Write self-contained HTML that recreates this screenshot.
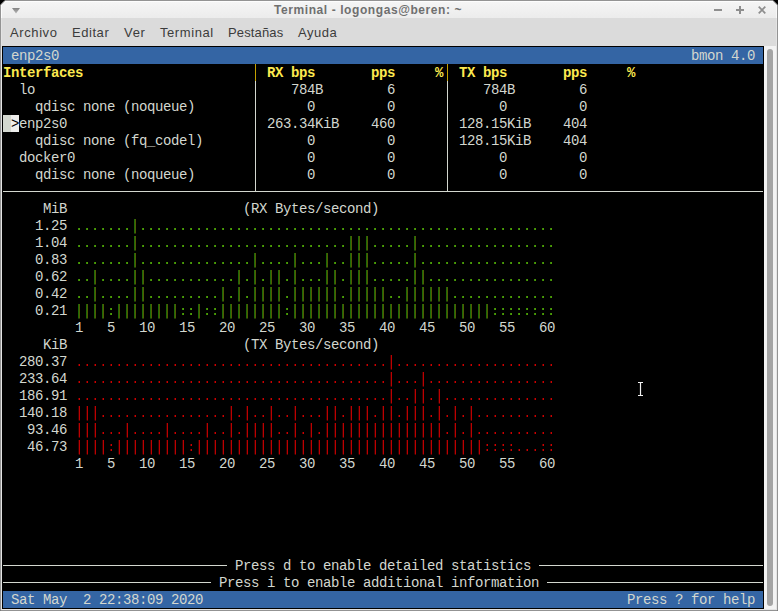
<!DOCTYPE html>
<html><head><meta charset="utf-8"><title>Terminal - logongas@beren: ~</title>
<style>
html,body{margin:0;padding:0;background:#000;}
body{width:778px;height:611px;position:relative;overflow:hidden;font-family:"Liberation Sans",sans-serif;}
#win{position:absolute;left:0;top:0;width:776px;height:609px;border:1px solid #939393;border-radius:5px 5px 0 0;background:#dbdbdb;overflow:hidden;}
#inner{position:absolute;left:1px;top:18px;width:774px;height:591px;border:1px solid #e4e4e4;border-top:none;box-sizing:content-box;}
#title{position:absolute;left:1px;top:1px;width:776px;height:17px;background:linear-gradient(#f5f5f5,#ececec);border-radius:4px 4px 0 0;box-shadow:inset 1px 1px 0 #fdfdfd,inset -1px 0 0 #f8f8f8;}
#ttext{position:absolute;left:274px;top:0;font:bold 12px "Liberation Sans",sans-serif;letter-spacing:0.58px;color:#6f6f6f;line-height:20px;white-space:pre;}
#menu span{position:absolute;top:25px;font:13px "Liberation Sans",sans-serif;color:#3c3c3c;line-height:16px;white-space:pre;}
#term{position:absolute;left:2px;top:46px;width:762px;height:563px;background:#000;}
#sb{position:absolute;left:764px;top:46px;width:12px;height:563px;background:#f3f3f3;}
#thumb{position:absolute;left:767px;top:49px;width:6px;height:557px;border-radius:3px;background:#a4a4a4;}
.t{position:absolute;font:14px "Liberation Mono",monospace;letter-spacing:-0.4014px;line-height:17px;height:17px;color:#d3d7cf;white-space:pre;}
.b{font-weight:bold;}
i{position:absolute;display:block;}
.gb,.rb{width:2px;height:17px;background-repeat:no-repeat;}
.gb{background-image:linear-gradient(90deg,#1e6a08 50%,#505c02 50%),linear-gradient(90deg,#113805 50%,#293001 50%);background-size:2px 14px,2px 1px;background-position:0 2px,0 16px;}
.rb{background-image:linear-gradient(90deg,#3a0000 50%,#bc0000 50%),linear-gradient(90deg,#1a0000 50%,#620000 50%);background-size:2px 14px,2px 1px;background-position:0 2px,0 16px;}
.gd,.rd,.gc,.rc{width:2px;height:17px;background-repeat:no-repeat;background-size:2px 2px;}
.gd{background-image:linear-gradient(90deg,#3a8a06 50%,#4e9a06 50%);background-position:0 11px;}
.rd{background-image:linear-gradient(90deg,#600000 50%,#cc0000 50%);background-position:0 11px;}
.gc{background-image:linear-gradient(90deg,#3a8a06 50%,#4e9a06 50%),linear-gradient(90deg,#3a8a06 50%,#4e9a06 50%);background-position:0 6px,0 11px;}
.rc{background-image:linear-gradient(90deg,#600000 50%,#cc0000 50%),linear-gradient(90deg,#600000 50%,#cc0000 50%);background-position:0 6px,0 11px;}
svg{position:absolute;}
</style></head><body>
<div id="win"></div><div id="inner"></div>
<div id="title"></div>
<div id="ttext">Terminal - logongas@beren: ~</div>
<svg style="left:0;top:0" width="778" height="20" viewBox="0 0 778 20">
<defs><linearGradient id="tg" x1="0" y1="0" x2="0" y2="1"><stop offset="0" stop-color="#838383"/><stop offset="1" stop-color="#b4b4b4"/></linearGradient></defs><path d="M12 8 L20 8 L16 13.4 Z" fill="url(#tg)"/>
<path d="M0 0 H5.3 L0 5.3 Z M778 0 H772.7 L778 5.3 Z" fill="#000"/><path d="M5.3 0.3 L0.3 5.3 M772.7 0.3 L777.7 5.3" stroke="#939393" stroke-width="1" fill="none"/><rect x="714" y="9" width="8" height="2" fill="#8e8e8e"/>
<rect x="736" y="9" width="8" height="2" fill="#8e8e8e"/><rect x="739" y="6" width="2" height="8" fill="#8e8e8e"/>
<path d="M758.7 6.7 L765.3 13.3 M765.3 6.7 L758.7 13.3" stroke="#8e8e8e" stroke-width="1.7" fill="none"/>
</svg>
<div id="menu">
<span style="left:10px;letter-spacing:.6px">Archivo</span><span style="left:72px;letter-spacing:.55px">Editar</span><span style="left:124px;letter-spacing:.7px">Ver</span><span style="left:160px;letter-spacing:.57px">Terminal</span><span style="left:228px;letter-spacing:.15px">Pestañas</span><span style="left:298px;letter-spacing:.5px">Ayuda</span>
</div>
<div id="term"></div>
<div id="sb"></div><div id="thumb"></div>
<i style="left:3px;top:47px;width:760px;height:17px;background:#3465a4"></i>
<span class="t" style="left:11px;top:48px;">enp2s0</span>
<span class="t" style="left:691px;top:48px;">bmon</span>
<span class="t" style="left:731px;top:48px;">4.0</span>
<span class="t b" style="left:3px;top:65px;color:#fce94f;">Interfaces</span>
<span class="t b" style="left:267px;top:65px;color:#fce94f;">RX</span>
<span class="t b" style="left:291px;top:65px;color:#fce94f;">bps</span>
<span class="t b" style="left:371px;top:65px;color:#fce94f;">pps</span>
<span class="t b" style="left:435px;top:65px;color:#fce94f;">%</span>
<span class="t b" style="left:459px;top:65px;color:#fce94f;">TX</span>
<span class="t b" style="left:483px;top:65px;color:#fce94f;">bps</span>
<span class="t b" style="left:563px;top:65px;color:#fce94f;">pps</span>
<span class="t b" style="left:627px;top:65px;color:#fce94f;">%</span>
<span class="t" style="left:19px;top:82px;">lo</span>
<span class="t" style="left:291px;top:82px;">784B</span>
<span class="t" style="left:387px;top:82px;">6</span>
<span class="t" style="left:483px;top:82px;">784B</span>
<span class="t" style="left:579px;top:82px;">6</span>
<span class="t" style="left:35px;top:99px;">qdisc</span>
<span class="t" style="left:83px;top:99px;">none</span>
<span class="t" style="left:123px;top:99px;">(noqueue)</span>
<span class="t" style="left:307px;top:99px;">0</span>
<span class="t" style="left:387px;top:99px;">0</span>
<span class="t" style="left:499px;top:99px;">0</span>
<span class="t" style="left:579px;top:99px;">0</span>
<span class="t" style="left:19px;top:116px;">enp2s0</span>
<span class="t" style="left:267px;top:116px;">263.34KiB</span>
<span class="t" style="left:371px;top:116px;">460</span>
<span class="t" style="left:459px;top:116px;">128.15KiB</span>
<span class="t" style="left:563px;top:116px;">404</span>
<span class="t" style="left:35px;top:133px;">qdisc</span>
<span class="t" style="left:83px;top:133px;">none</span>
<span class="t" style="left:123px;top:133px;">(fq_codel)</span>
<span class="t" style="left:307px;top:133px;">0</span>
<span class="t" style="left:387px;top:133px;">0</span>
<span class="t" style="left:459px;top:133px;">128.15KiB</span>
<span class="t" style="left:563px;top:133px;">404</span>
<span class="t" style="left:19px;top:150px;">docker0</span>
<span class="t" style="left:307px;top:150px;">0</span>
<span class="t" style="left:387px;top:150px;">0</span>
<span class="t" style="left:499px;top:150px;">0</span>
<span class="t" style="left:579px;top:150px;">0</span>
<span class="t" style="left:35px;top:167px;">qdisc</span>
<span class="t" style="left:83px;top:167px;">none</span>
<span class="t" style="left:123px;top:167px;">(noqueue)</span>
<span class="t" style="left:307px;top:167px;">0</span>
<span class="t" style="left:387px;top:167px;">0</span>
<span class="t" style="left:499px;top:167px;">0</span>
<span class="t" style="left:579px;top:167px;">0</span>
<i style="left:3px;top:115px;width:8px;height:17px;background:#d3d7cf"></i>
<i style="left:11px;top:115px;width:8px;height:17px;background:#eeeeec"></i>
<span class="t" style="left:11px;top:116px;color:#000;">&gt;</span>
<i style="left:255px;top:64px;width:1px;height:17px;background:#c4a000"></i>
<i style="left:255px;top:81px;width:1px;height:110px;background:#d3d7cf"></i>
<i style="left:447px;top:64px;width:1px;height:17px;background:#c4a000"></i>
<i style="left:447px;top:81px;width:1px;height:110px;background:#d3d7cf"></i>
<i style="left:3px;top:191px;width:760px;height:1px;background:#d3d7cf"></i>
<i class="gd" style="left:78px;top:217px"></i>
<i class="gd" style="left:86px;top:217px"></i>
<i class="gd" style="left:94px;top:217px"></i>
<i class="gd" style="left:102px;top:217px"></i>
<i class="gd" style="left:110px;top:217px"></i>
<i class="gd" style="left:118px;top:217px"></i>
<i class="gd" style="left:126px;top:217px"></i>
<i class="gb" style="left:134px;top:217px"></i>
<i class="gd" style="left:142px;top:217px"></i>
<i class="gd" style="left:150px;top:217px"></i>
<i class="gd" style="left:158px;top:217px"></i>
<i class="gd" style="left:166px;top:217px"></i>
<i class="gd" style="left:174px;top:217px"></i>
<i class="gd" style="left:182px;top:217px"></i>
<i class="gd" style="left:190px;top:217px"></i>
<i class="gd" style="left:198px;top:217px"></i>
<i class="gd" style="left:206px;top:217px"></i>
<i class="gd" style="left:214px;top:217px"></i>
<i class="gd" style="left:222px;top:217px"></i>
<i class="gd" style="left:230px;top:217px"></i>
<i class="gd" style="left:238px;top:217px"></i>
<i class="gd" style="left:246px;top:217px"></i>
<i class="gd" style="left:254px;top:217px"></i>
<i class="gd" style="left:262px;top:217px"></i>
<i class="gd" style="left:270px;top:217px"></i>
<i class="gd" style="left:278px;top:217px"></i>
<i class="gd" style="left:286px;top:217px"></i>
<i class="gd" style="left:294px;top:217px"></i>
<i class="gd" style="left:302px;top:217px"></i>
<i class="gd" style="left:310px;top:217px"></i>
<i class="gd" style="left:318px;top:217px"></i>
<i class="gd" style="left:326px;top:217px"></i>
<i class="gd" style="left:334px;top:217px"></i>
<i class="gd" style="left:342px;top:217px"></i>
<i class="gd" style="left:350px;top:217px"></i>
<i class="gd" style="left:358px;top:217px"></i>
<i class="gd" style="left:366px;top:217px"></i>
<i class="gd" style="left:374px;top:217px"></i>
<i class="gd" style="left:382px;top:217px"></i>
<i class="gd" style="left:390px;top:217px"></i>
<i class="gd" style="left:398px;top:217px"></i>
<i class="gd" style="left:406px;top:217px"></i>
<i class="gd" style="left:414px;top:217px"></i>
<i class="gd" style="left:422px;top:217px"></i>
<i class="gd" style="left:430px;top:217px"></i>
<i class="gd" style="left:438px;top:217px"></i>
<i class="gd" style="left:446px;top:217px"></i>
<i class="gd" style="left:454px;top:217px"></i>
<i class="gd" style="left:462px;top:217px"></i>
<i class="gd" style="left:470px;top:217px"></i>
<i class="gd" style="left:478px;top:217px"></i>
<i class="gd" style="left:486px;top:217px"></i>
<i class="gd" style="left:494px;top:217px"></i>
<i class="gd" style="left:502px;top:217px"></i>
<i class="gd" style="left:510px;top:217px"></i>
<i class="gd" style="left:518px;top:217px"></i>
<i class="gd" style="left:526px;top:217px"></i>
<i class="gd" style="left:534px;top:217px"></i>
<i class="gd" style="left:542px;top:217px"></i>
<i class="gd" style="left:550px;top:217px"></i>
<i class="gd" style="left:78px;top:234px"></i>
<i class="gd" style="left:86px;top:234px"></i>
<i class="gd" style="left:94px;top:234px"></i>
<i class="gd" style="left:102px;top:234px"></i>
<i class="gd" style="left:110px;top:234px"></i>
<i class="gd" style="left:118px;top:234px"></i>
<i class="gd" style="left:126px;top:234px"></i>
<i class="gb" style="left:134px;top:234px"></i>
<i class="gd" style="left:142px;top:234px"></i>
<i class="gd" style="left:150px;top:234px"></i>
<i class="gd" style="left:158px;top:234px"></i>
<i class="gd" style="left:166px;top:234px"></i>
<i class="gd" style="left:174px;top:234px"></i>
<i class="gd" style="left:182px;top:234px"></i>
<i class="gd" style="left:190px;top:234px"></i>
<i class="gd" style="left:198px;top:234px"></i>
<i class="gd" style="left:206px;top:234px"></i>
<i class="gd" style="left:214px;top:234px"></i>
<i class="gd" style="left:222px;top:234px"></i>
<i class="gd" style="left:230px;top:234px"></i>
<i class="gd" style="left:238px;top:234px"></i>
<i class="gd" style="left:246px;top:234px"></i>
<i class="gd" style="left:254px;top:234px"></i>
<i class="gd" style="left:262px;top:234px"></i>
<i class="gd" style="left:270px;top:234px"></i>
<i class="gd" style="left:278px;top:234px"></i>
<i class="gd" style="left:286px;top:234px"></i>
<i class="gd" style="left:294px;top:234px"></i>
<i class="gd" style="left:302px;top:234px"></i>
<i class="gd" style="left:310px;top:234px"></i>
<i class="gd" style="left:318px;top:234px"></i>
<i class="gd" style="left:326px;top:234px"></i>
<i class="gd" style="left:334px;top:234px"></i>
<i class="gd" style="left:342px;top:234px"></i>
<i class="gb" style="left:350px;top:234px"></i>
<i class="gb" style="left:358px;top:234px"></i>
<i class="gb" style="left:366px;top:234px"></i>
<i class="gd" style="left:374px;top:234px"></i>
<i class="gd" style="left:382px;top:234px"></i>
<i class="gd" style="left:390px;top:234px"></i>
<i class="gd" style="left:398px;top:234px"></i>
<i class="gd" style="left:406px;top:234px"></i>
<i class="gb" style="left:414px;top:234px"></i>
<i class="gd" style="left:422px;top:234px"></i>
<i class="gd" style="left:430px;top:234px"></i>
<i class="gd" style="left:438px;top:234px"></i>
<i class="gd" style="left:446px;top:234px"></i>
<i class="gd" style="left:454px;top:234px"></i>
<i class="gd" style="left:462px;top:234px"></i>
<i class="gd" style="left:470px;top:234px"></i>
<i class="gd" style="left:478px;top:234px"></i>
<i class="gd" style="left:486px;top:234px"></i>
<i class="gd" style="left:494px;top:234px"></i>
<i class="gd" style="left:502px;top:234px"></i>
<i class="gd" style="left:510px;top:234px"></i>
<i class="gd" style="left:518px;top:234px"></i>
<i class="gd" style="left:526px;top:234px"></i>
<i class="gd" style="left:534px;top:234px"></i>
<i class="gd" style="left:542px;top:234px"></i>
<i class="gd" style="left:550px;top:234px"></i>
<i class="gd" style="left:78px;top:251px"></i>
<i class="gd" style="left:86px;top:251px"></i>
<i class="gd" style="left:94px;top:251px"></i>
<i class="gd" style="left:102px;top:251px"></i>
<i class="gd" style="left:110px;top:251px"></i>
<i class="gd" style="left:118px;top:251px"></i>
<i class="gd" style="left:126px;top:251px"></i>
<i class="gb" style="left:134px;top:251px"></i>
<i class="gd" style="left:142px;top:251px"></i>
<i class="gd" style="left:150px;top:251px"></i>
<i class="gd" style="left:158px;top:251px"></i>
<i class="gd" style="left:166px;top:251px"></i>
<i class="gd" style="left:174px;top:251px"></i>
<i class="gd" style="left:182px;top:251px"></i>
<i class="gd" style="left:190px;top:251px"></i>
<i class="gd" style="left:198px;top:251px"></i>
<i class="gd" style="left:206px;top:251px"></i>
<i class="gd" style="left:214px;top:251px"></i>
<i class="gd" style="left:222px;top:251px"></i>
<i class="gd" style="left:230px;top:251px"></i>
<i class="gd" style="left:238px;top:251px"></i>
<i class="gd" style="left:246px;top:251px"></i>
<i class="gb" style="left:254px;top:251px"></i>
<i class="gd" style="left:262px;top:251px"></i>
<i class="gd" style="left:270px;top:251px"></i>
<i class="gd" style="left:278px;top:251px"></i>
<i class="gd" style="left:286px;top:251px"></i>
<i class="gb" style="left:294px;top:251px"></i>
<i class="gd" style="left:302px;top:251px"></i>
<i class="gd" style="left:310px;top:251px"></i>
<i class="gd" style="left:318px;top:251px"></i>
<i class="gb" style="left:326px;top:251px"></i>
<i class="gd" style="left:334px;top:251px"></i>
<i class="gd" style="left:342px;top:251px"></i>
<i class="gb" style="left:350px;top:251px"></i>
<i class="gb" style="left:358px;top:251px"></i>
<i class="gb" style="left:366px;top:251px"></i>
<i class="gd" style="left:374px;top:251px"></i>
<i class="gd" style="left:382px;top:251px"></i>
<i class="gd" style="left:390px;top:251px"></i>
<i class="gd" style="left:398px;top:251px"></i>
<i class="gd" style="left:406px;top:251px"></i>
<i class="gb" style="left:414px;top:251px"></i>
<i class="gd" style="left:422px;top:251px"></i>
<i class="gd" style="left:430px;top:251px"></i>
<i class="gd" style="left:438px;top:251px"></i>
<i class="gd" style="left:446px;top:251px"></i>
<i class="gd" style="left:454px;top:251px"></i>
<i class="gd" style="left:462px;top:251px"></i>
<i class="gd" style="left:470px;top:251px"></i>
<i class="gd" style="left:478px;top:251px"></i>
<i class="gd" style="left:486px;top:251px"></i>
<i class="gd" style="left:494px;top:251px"></i>
<i class="gd" style="left:502px;top:251px"></i>
<i class="gd" style="left:510px;top:251px"></i>
<i class="gd" style="left:518px;top:251px"></i>
<i class="gd" style="left:526px;top:251px"></i>
<i class="gd" style="left:534px;top:251px"></i>
<i class="gd" style="left:542px;top:251px"></i>
<i class="gd" style="left:550px;top:251px"></i>
<i class="gd" style="left:78px;top:268px"></i>
<i class="gd" style="left:86px;top:268px"></i>
<i class="gb" style="left:94px;top:268px"></i>
<i class="gd" style="left:102px;top:268px"></i>
<i class="gd" style="left:110px;top:268px"></i>
<i class="gd" style="left:118px;top:268px"></i>
<i class="gd" style="left:126px;top:268px"></i>
<i class="gb" style="left:134px;top:268px"></i>
<i class="gb" style="left:142px;top:268px"></i>
<i class="gd" style="left:150px;top:268px"></i>
<i class="gd" style="left:158px;top:268px"></i>
<i class="gd" style="left:166px;top:268px"></i>
<i class="gd" style="left:174px;top:268px"></i>
<i class="gd" style="left:182px;top:268px"></i>
<i class="gd" style="left:190px;top:268px"></i>
<i class="gd" style="left:198px;top:268px"></i>
<i class="gd" style="left:206px;top:268px"></i>
<i class="gd" style="left:214px;top:268px"></i>
<i class="gd" style="left:222px;top:268px"></i>
<i class="gd" style="left:230px;top:268px"></i>
<i class="gb" style="left:238px;top:268px"></i>
<i class="gd" style="left:246px;top:268px"></i>
<i class="gb" style="left:254px;top:268px"></i>
<i class="gd" style="left:262px;top:268px"></i>
<i class="gb" style="left:270px;top:268px"></i>
<i class="gb" style="left:278px;top:268px"></i>
<i class="gd" style="left:286px;top:268px"></i>
<i class="gb" style="left:294px;top:268px"></i>
<i class="gd" style="left:302px;top:268px"></i>
<i class="gd" style="left:310px;top:268px"></i>
<i class="gd" style="left:318px;top:268px"></i>
<i class="gb" style="left:326px;top:268px"></i>
<i class="gb" style="left:334px;top:268px"></i>
<i class="gd" style="left:342px;top:268px"></i>
<i class="gb" style="left:350px;top:268px"></i>
<i class="gb" style="left:358px;top:268px"></i>
<i class="gb" style="left:366px;top:268px"></i>
<i class="gd" style="left:374px;top:268px"></i>
<i class="gd" style="left:382px;top:268px"></i>
<i class="gd" style="left:390px;top:268px"></i>
<i class="gd" style="left:398px;top:268px"></i>
<i class="gd" style="left:406px;top:268px"></i>
<i class="gb" style="left:414px;top:268px"></i>
<i class="gb" style="left:422px;top:268px"></i>
<i class="gd" style="left:430px;top:268px"></i>
<i class="gd" style="left:438px;top:268px"></i>
<i class="gd" style="left:446px;top:268px"></i>
<i class="gd" style="left:454px;top:268px"></i>
<i class="gd" style="left:462px;top:268px"></i>
<i class="gd" style="left:470px;top:268px"></i>
<i class="gd" style="left:478px;top:268px"></i>
<i class="gd" style="left:486px;top:268px"></i>
<i class="gd" style="left:494px;top:268px"></i>
<i class="gd" style="left:502px;top:268px"></i>
<i class="gd" style="left:510px;top:268px"></i>
<i class="gd" style="left:518px;top:268px"></i>
<i class="gd" style="left:526px;top:268px"></i>
<i class="gd" style="left:534px;top:268px"></i>
<i class="gd" style="left:542px;top:268px"></i>
<i class="gd" style="left:550px;top:268px"></i>
<i class="gd" style="left:78px;top:285px"></i>
<i class="gd" style="left:86px;top:285px"></i>
<i class="gb" style="left:94px;top:285px"></i>
<i class="gd" style="left:102px;top:285px"></i>
<i class="gd" style="left:110px;top:285px"></i>
<i class="gd" style="left:118px;top:285px"></i>
<i class="gd" style="left:126px;top:285px"></i>
<i class="gb" style="left:134px;top:285px"></i>
<i class="gb" style="left:142px;top:285px"></i>
<i class="gd" style="left:150px;top:285px"></i>
<i class="gd" style="left:158px;top:285px"></i>
<i class="gd" style="left:166px;top:285px"></i>
<i class="gd" style="left:174px;top:285px"></i>
<i class="gd" style="left:182px;top:285px"></i>
<i class="gd" style="left:190px;top:285px"></i>
<i class="gd" style="left:198px;top:285px"></i>
<i class="gd" style="left:206px;top:285px"></i>
<i class="gd" style="left:214px;top:285px"></i>
<i class="gb" style="left:222px;top:285px"></i>
<i class="gd" style="left:230px;top:285px"></i>
<i class="gb" style="left:238px;top:285px"></i>
<i class="gd" style="left:246px;top:285px"></i>
<i class="gb" style="left:254px;top:285px"></i>
<i class="gb" style="left:262px;top:285px"></i>
<i class="gb" style="left:270px;top:285px"></i>
<i class="gb" style="left:278px;top:285px"></i>
<i class="gd" style="left:286px;top:285px"></i>
<i class="gb" style="left:294px;top:285px"></i>
<i class="gb" style="left:302px;top:285px"></i>
<i class="gb" style="left:310px;top:285px"></i>
<i class="gb" style="left:318px;top:285px"></i>
<i class="gb" style="left:326px;top:285px"></i>
<i class="gb" style="left:334px;top:285px"></i>
<i class="gd" style="left:342px;top:285px"></i>
<i class="gb" style="left:350px;top:285px"></i>
<i class="gb" style="left:358px;top:285px"></i>
<i class="gb" style="left:366px;top:285px"></i>
<i class="gb" style="left:374px;top:285px"></i>
<i class="gb" style="left:382px;top:285px"></i>
<i class="gd" style="left:390px;top:285px"></i>
<i class="gd" style="left:398px;top:285px"></i>
<i class="gb" style="left:406px;top:285px"></i>
<i class="gb" style="left:414px;top:285px"></i>
<i class="gb" style="left:422px;top:285px"></i>
<i class="gb" style="left:430px;top:285px"></i>
<i class="gb" style="left:438px;top:285px"></i>
<i class="gb" style="left:446px;top:285px"></i>
<i class="gd" style="left:454px;top:285px"></i>
<i class="gd" style="left:462px;top:285px"></i>
<i class="gd" style="left:470px;top:285px"></i>
<i class="gd" style="left:478px;top:285px"></i>
<i class="gd" style="left:486px;top:285px"></i>
<i class="gd" style="left:494px;top:285px"></i>
<i class="gd" style="left:502px;top:285px"></i>
<i class="gd" style="left:510px;top:285px"></i>
<i class="gd" style="left:518px;top:285px"></i>
<i class="gd" style="left:526px;top:285px"></i>
<i class="gd" style="left:534px;top:285px"></i>
<i class="gd" style="left:542px;top:285px"></i>
<i class="gd" style="left:550px;top:285px"></i>
<i class="gb" style="left:78px;top:302px"></i>
<i class="gb" style="left:86px;top:302px"></i>
<i class="gb" style="left:94px;top:302px"></i>
<i class="gb" style="left:102px;top:302px"></i>
<i class="gc" style="left:110px;top:302px"></i>
<i class="gb" style="left:118px;top:302px"></i>
<i class="gb" style="left:126px;top:302px"></i>
<i class="gb" style="left:134px;top:302px"></i>
<i class="gb" style="left:142px;top:302px"></i>
<i class="gb" style="left:150px;top:302px"></i>
<i class="gb" style="left:158px;top:302px"></i>
<i class="gb" style="left:166px;top:302px"></i>
<i class="gb" style="left:174px;top:302px"></i>
<i class="gc" style="left:182px;top:302px"></i>
<i class="gc" style="left:190px;top:302px"></i>
<i class="gb" style="left:198px;top:302px"></i>
<i class="gc" style="left:206px;top:302px"></i>
<i class="gc" style="left:214px;top:302px"></i>
<i class="gb" style="left:222px;top:302px"></i>
<i class="gb" style="left:230px;top:302px"></i>
<i class="gb" style="left:238px;top:302px"></i>
<i class="gb" style="left:246px;top:302px"></i>
<i class="gb" style="left:254px;top:302px"></i>
<i class="gb" style="left:262px;top:302px"></i>
<i class="gb" style="left:270px;top:302px"></i>
<i class="gb" style="left:278px;top:302px"></i>
<i class="gc" style="left:286px;top:302px"></i>
<i class="gb" style="left:294px;top:302px"></i>
<i class="gb" style="left:302px;top:302px"></i>
<i class="gb" style="left:310px;top:302px"></i>
<i class="gb" style="left:318px;top:302px"></i>
<i class="gb" style="left:326px;top:302px"></i>
<i class="gb" style="left:334px;top:302px"></i>
<i class="gb" style="left:342px;top:302px"></i>
<i class="gb" style="left:350px;top:302px"></i>
<i class="gb" style="left:358px;top:302px"></i>
<i class="gb" style="left:366px;top:302px"></i>
<i class="gb" style="left:374px;top:302px"></i>
<i class="gb" style="left:382px;top:302px"></i>
<i class="gb" style="left:390px;top:302px"></i>
<i class="gb" style="left:398px;top:302px"></i>
<i class="gb" style="left:406px;top:302px"></i>
<i class="gb" style="left:414px;top:302px"></i>
<i class="gb" style="left:422px;top:302px"></i>
<i class="gb" style="left:430px;top:302px"></i>
<i class="gb" style="left:438px;top:302px"></i>
<i class="gb" style="left:446px;top:302px"></i>
<i class="gb" style="left:454px;top:302px"></i>
<i class="gb" style="left:462px;top:302px"></i>
<i class="gb" style="left:470px;top:302px"></i>
<i class="gb" style="left:478px;top:302px"></i>
<i class="gb" style="left:486px;top:302px"></i>
<i class="gc" style="left:494px;top:302px"></i>
<i class="gc" style="left:502px;top:302px"></i>
<i class="gc" style="left:510px;top:302px"></i>
<i class="gc" style="left:518px;top:302px"></i>
<i class="gc" style="left:526px;top:302px"></i>
<i class="gc" style="left:534px;top:302px"></i>
<i class="gc" style="left:542px;top:302px"></i>
<i class="gc" style="left:550px;top:302px"></i>
<i class="rd" style="left:78px;top:353px"></i>
<i class="rd" style="left:86px;top:353px"></i>
<i class="rd" style="left:94px;top:353px"></i>
<i class="rd" style="left:102px;top:353px"></i>
<i class="rd" style="left:110px;top:353px"></i>
<i class="rd" style="left:118px;top:353px"></i>
<i class="rd" style="left:126px;top:353px"></i>
<i class="rd" style="left:134px;top:353px"></i>
<i class="rd" style="left:142px;top:353px"></i>
<i class="rd" style="left:150px;top:353px"></i>
<i class="rd" style="left:158px;top:353px"></i>
<i class="rd" style="left:166px;top:353px"></i>
<i class="rd" style="left:174px;top:353px"></i>
<i class="rd" style="left:182px;top:353px"></i>
<i class="rd" style="left:190px;top:353px"></i>
<i class="rd" style="left:198px;top:353px"></i>
<i class="rd" style="left:206px;top:353px"></i>
<i class="rd" style="left:214px;top:353px"></i>
<i class="rd" style="left:222px;top:353px"></i>
<i class="rd" style="left:230px;top:353px"></i>
<i class="rd" style="left:238px;top:353px"></i>
<i class="rd" style="left:246px;top:353px"></i>
<i class="rd" style="left:254px;top:353px"></i>
<i class="rd" style="left:262px;top:353px"></i>
<i class="rd" style="left:270px;top:353px"></i>
<i class="rd" style="left:278px;top:353px"></i>
<i class="rd" style="left:286px;top:353px"></i>
<i class="rd" style="left:294px;top:353px"></i>
<i class="rd" style="left:302px;top:353px"></i>
<i class="rd" style="left:310px;top:353px"></i>
<i class="rd" style="left:318px;top:353px"></i>
<i class="rd" style="left:326px;top:353px"></i>
<i class="rd" style="left:334px;top:353px"></i>
<i class="rd" style="left:342px;top:353px"></i>
<i class="rd" style="left:350px;top:353px"></i>
<i class="rd" style="left:358px;top:353px"></i>
<i class="rd" style="left:366px;top:353px"></i>
<i class="rd" style="left:374px;top:353px"></i>
<i class="rd" style="left:382px;top:353px"></i>
<i class="rb" style="left:390px;top:353px"></i>
<i class="rd" style="left:398px;top:353px"></i>
<i class="rd" style="left:406px;top:353px"></i>
<i class="rd" style="left:414px;top:353px"></i>
<i class="rd" style="left:422px;top:353px"></i>
<i class="rd" style="left:430px;top:353px"></i>
<i class="rd" style="left:438px;top:353px"></i>
<i class="rd" style="left:446px;top:353px"></i>
<i class="rd" style="left:454px;top:353px"></i>
<i class="rd" style="left:462px;top:353px"></i>
<i class="rd" style="left:470px;top:353px"></i>
<i class="rd" style="left:478px;top:353px"></i>
<i class="rd" style="left:486px;top:353px"></i>
<i class="rd" style="left:494px;top:353px"></i>
<i class="rd" style="left:502px;top:353px"></i>
<i class="rd" style="left:510px;top:353px"></i>
<i class="rd" style="left:518px;top:353px"></i>
<i class="rd" style="left:526px;top:353px"></i>
<i class="rd" style="left:534px;top:353px"></i>
<i class="rd" style="left:542px;top:353px"></i>
<i class="rd" style="left:550px;top:353px"></i>
<i class="rd" style="left:78px;top:370px"></i>
<i class="rd" style="left:86px;top:370px"></i>
<i class="rd" style="left:94px;top:370px"></i>
<i class="rd" style="left:102px;top:370px"></i>
<i class="rd" style="left:110px;top:370px"></i>
<i class="rd" style="left:118px;top:370px"></i>
<i class="rd" style="left:126px;top:370px"></i>
<i class="rd" style="left:134px;top:370px"></i>
<i class="rd" style="left:142px;top:370px"></i>
<i class="rd" style="left:150px;top:370px"></i>
<i class="rd" style="left:158px;top:370px"></i>
<i class="rd" style="left:166px;top:370px"></i>
<i class="rd" style="left:174px;top:370px"></i>
<i class="rd" style="left:182px;top:370px"></i>
<i class="rd" style="left:190px;top:370px"></i>
<i class="rd" style="left:198px;top:370px"></i>
<i class="rd" style="left:206px;top:370px"></i>
<i class="rd" style="left:214px;top:370px"></i>
<i class="rd" style="left:222px;top:370px"></i>
<i class="rd" style="left:230px;top:370px"></i>
<i class="rd" style="left:238px;top:370px"></i>
<i class="rd" style="left:246px;top:370px"></i>
<i class="rd" style="left:254px;top:370px"></i>
<i class="rd" style="left:262px;top:370px"></i>
<i class="rd" style="left:270px;top:370px"></i>
<i class="rd" style="left:278px;top:370px"></i>
<i class="rd" style="left:286px;top:370px"></i>
<i class="rd" style="left:294px;top:370px"></i>
<i class="rd" style="left:302px;top:370px"></i>
<i class="rd" style="left:310px;top:370px"></i>
<i class="rd" style="left:318px;top:370px"></i>
<i class="rd" style="left:326px;top:370px"></i>
<i class="rd" style="left:334px;top:370px"></i>
<i class="rd" style="left:342px;top:370px"></i>
<i class="rd" style="left:350px;top:370px"></i>
<i class="rd" style="left:358px;top:370px"></i>
<i class="rd" style="left:366px;top:370px"></i>
<i class="rd" style="left:374px;top:370px"></i>
<i class="rd" style="left:382px;top:370px"></i>
<i class="rb" style="left:390px;top:370px"></i>
<i class="rd" style="left:398px;top:370px"></i>
<i class="rd" style="left:406px;top:370px"></i>
<i class="rd" style="left:414px;top:370px"></i>
<i class="rb" style="left:422px;top:370px"></i>
<i class="rd" style="left:430px;top:370px"></i>
<i class="rd" style="left:438px;top:370px"></i>
<i class="rd" style="left:446px;top:370px"></i>
<i class="rd" style="left:454px;top:370px"></i>
<i class="rd" style="left:462px;top:370px"></i>
<i class="rd" style="left:470px;top:370px"></i>
<i class="rd" style="left:478px;top:370px"></i>
<i class="rd" style="left:486px;top:370px"></i>
<i class="rd" style="left:494px;top:370px"></i>
<i class="rd" style="left:502px;top:370px"></i>
<i class="rd" style="left:510px;top:370px"></i>
<i class="rd" style="left:518px;top:370px"></i>
<i class="rd" style="left:526px;top:370px"></i>
<i class="rd" style="left:534px;top:370px"></i>
<i class="rd" style="left:542px;top:370px"></i>
<i class="rd" style="left:550px;top:370px"></i>
<i class="rd" style="left:78px;top:387px"></i>
<i class="rd" style="left:86px;top:387px"></i>
<i class="rd" style="left:94px;top:387px"></i>
<i class="rd" style="left:102px;top:387px"></i>
<i class="rd" style="left:110px;top:387px"></i>
<i class="rd" style="left:118px;top:387px"></i>
<i class="rd" style="left:126px;top:387px"></i>
<i class="rd" style="left:134px;top:387px"></i>
<i class="rd" style="left:142px;top:387px"></i>
<i class="rd" style="left:150px;top:387px"></i>
<i class="rd" style="left:158px;top:387px"></i>
<i class="rd" style="left:166px;top:387px"></i>
<i class="rd" style="left:174px;top:387px"></i>
<i class="rd" style="left:182px;top:387px"></i>
<i class="rd" style="left:190px;top:387px"></i>
<i class="rd" style="left:198px;top:387px"></i>
<i class="rd" style="left:206px;top:387px"></i>
<i class="rd" style="left:214px;top:387px"></i>
<i class="rd" style="left:222px;top:387px"></i>
<i class="rd" style="left:230px;top:387px"></i>
<i class="rd" style="left:238px;top:387px"></i>
<i class="rd" style="left:246px;top:387px"></i>
<i class="rd" style="left:254px;top:387px"></i>
<i class="rd" style="left:262px;top:387px"></i>
<i class="rd" style="left:270px;top:387px"></i>
<i class="rd" style="left:278px;top:387px"></i>
<i class="rd" style="left:286px;top:387px"></i>
<i class="rd" style="left:294px;top:387px"></i>
<i class="rd" style="left:302px;top:387px"></i>
<i class="rd" style="left:310px;top:387px"></i>
<i class="rd" style="left:318px;top:387px"></i>
<i class="rd" style="left:326px;top:387px"></i>
<i class="rd" style="left:334px;top:387px"></i>
<i class="rd" style="left:342px;top:387px"></i>
<i class="rd" style="left:350px;top:387px"></i>
<i class="rd" style="left:358px;top:387px"></i>
<i class="rd" style="left:366px;top:387px"></i>
<i class="rd" style="left:374px;top:387px"></i>
<i class="rd" style="left:382px;top:387px"></i>
<i class="rb" style="left:390px;top:387px"></i>
<i class="rd" style="left:398px;top:387px"></i>
<i class="rd" style="left:406px;top:387px"></i>
<i class="rb" style="left:414px;top:387px"></i>
<i class="rb" style="left:422px;top:387px"></i>
<i class="rd" style="left:430px;top:387px"></i>
<i class="rb" style="left:438px;top:387px"></i>
<i class="rd" style="left:446px;top:387px"></i>
<i class="rd" style="left:454px;top:387px"></i>
<i class="rd" style="left:462px;top:387px"></i>
<i class="rd" style="left:470px;top:387px"></i>
<i class="rd" style="left:478px;top:387px"></i>
<i class="rd" style="left:486px;top:387px"></i>
<i class="rd" style="left:494px;top:387px"></i>
<i class="rd" style="left:502px;top:387px"></i>
<i class="rd" style="left:510px;top:387px"></i>
<i class="rd" style="left:518px;top:387px"></i>
<i class="rd" style="left:526px;top:387px"></i>
<i class="rd" style="left:534px;top:387px"></i>
<i class="rd" style="left:542px;top:387px"></i>
<i class="rd" style="left:550px;top:387px"></i>
<i class="rb" style="left:78px;top:404px"></i>
<i class="rb" style="left:86px;top:404px"></i>
<i class="rb" style="left:94px;top:404px"></i>
<i class="rd" style="left:102px;top:404px"></i>
<i class="rd" style="left:110px;top:404px"></i>
<i class="rd" style="left:118px;top:404px"></i>
<i class="rd" style="left:126px;top:404px"></i>
<i class="rd" style="left:134px;top:404px"></i>
<i class="rd" style="left:142px;top:404px"></i>
<i class="rd" style="left:150px;top:404px"></i>
<i class="rd" style="left:158px;top:404px"></i>
<i class="rd" style="left:166px;top:404px"></i>
<i class="rd" style="left:174px;top:404px"></i>
<i class="rd" style="left:182px;top:404px"></i>
<i class="rd" style="left:190px;top:404px"></i>
<i class="rd" style="left:198px;top:404px"></i>
<i class="rd" style="left:206px;top:404px"></i>
<i class="rd" style="left:214px;top:404px"></i>
<i class="rd" style="left:222px;top:404px"></i>
<i class="rb" style="left:230px;top:404px"></i>
<i class="rd" style="left:238px;top:404px"></i>
<i class="rb" style="left:246px;top:404px"></i>
<i class="rd" style="left:254px;top:404px"></i>
<i class="rd" style="left:262px;top:404px"></i>
<i class="rb" style="left:270px;top:404px"></i>
<i class="rd" style="left:278px;top:404px"></i>
<i class="rd" style="left:286px;top:404px"></i>
<i class="rb" style="left:294px;top:404px"></i>
<i class="rd" style="left:302px;top:404px"></i>
<i class="rd" style="left:310px;top:404px"></i>
<i class="rd" style="left:318px;top:404px"></i>
<i class="rb" style="left:326px;top:404px"></i>
<i class="rb" style="left:334px;top:404px"></i>
<i class="rd" style="left:342px;top:404px"></i>
<i class="rb" style="left:350px;top:404px"></i>
<i class="rb" style="left:358px;top:404px"></i>
<i class="rb" style="left:366px;top:404px"></i>
<i class="rd" style="left:374px;top:404px"></i>
<i class="rb" style="left:382px;top:404px"></i>
<i class="rb" style="left:390px;top:404px"></i>
<i class="rd" style="left:398px;top:404px"></i>
<i class="rb" style="left:406px;top:404px"></i>
<i class="rb" style="left:414px;top:404px"></i>
<i class="rb" style="left:422px;top:404px"></i>
<i class="rd" style="left:430px;top:404px"></i>
<i class="rb" style="left:438px;top:404px"></i>
<i class="rd" style="left:446px;top:404px"></i>
<i class="rb" style="left:454px;top:404px"></i>
<i class="rd" style="left:462px;top:404px"></i>
<i class="rb" style="left:470px;top:404px"></i>
<i class="rd" style="left:478px;top:404px"></i>
<i class="rd" style="left:486px;top:404px"></i>
<i class="rd" style="left:494px;top:404px"></i>
<i class="rd" style="left:502px;top:404px"></i>
<i class="rd" style="left:510px;top:404px"></i>
<i class="rd" style="left:518px;top:404px"></i>
<i class="rd" style="left:526px;top:404px"></i>
<i class="rd" style="left:534px;top:404px"></i>
<i class="rd" style="left:542px;top:404px"></i>
<i class="rd" style="left:550px;top:404px"></i>
<i class="rb" style="left:78px;top:421px"></i>
<i class="rb" style="left:86px;top:421px"></i>
<i class="rb" style="left:94px;top:421px"></i>
<i class="rd" style="left:102px;top:421px"></i>
<i class="rd" style="left:110px;top:421px"></i>
<i class="rd" style="left:118px;top:421px"></i>
<i class="rb" style="left:126px;top:421px"></i>
<i class="rd" style="left:134px;top:421px"></i>
<i class="rd" style="left:142px;top:421px"></i>
<i class="rd" style="left:150px;top:421px"></i>
<i class="rd" style="left:158px;top:421px"></i>
<i class="rb" style="left:166px;top:421px"></i>
<i class="rd" style="left:174px;top:421px"></i>
<i class="rd" style="left:182px;top:421px"></i>
<i class="rd" style="left:190px;top:421px"></i>
<i class="rd" style="left:198px;top:421px"></i>
<i class="rb" style="left:206px;top:421px"></i>
<i class="rd" style="left:214px;top:421px"></i>
<i class="rd" style="left:222px;top:421px"></i>
<i class="rb" style="left:230px;top:421px"></i>
<i class="rd" style="left:238px;top:421px"></i>
<i class="rb" style="left:246px;top:421px"></i>
<i class="rb" style="left:254px;top:421px"></i>
<i class="rb" style="left:262px;top:421px"></i>
<i class="rb" style="left:270px;top:421px"></i>
<i class="rd" style="left:278px;top:421px"></i>
<i class="rd" style="left:286px;top:421px"></i>
<i class="rb" style="left:294px;top:421px"></i>
<i class="rd" style="left:302px;top:421px"></i>
<i class="rb" style="left:310px;top:421px"></i>
<i class="rd" style="left:318px;top:421px"></i>
<i class="rb" style="left:326px;top:421px"></i>
<i class="rb" style="left:334px;top:421px"></i>
<i class="rb" style="left:342px;top:421px"></i>
<i class="rb" style="left:350px;top:421px"></i>
<i class="rb" style="left:358px;top:421px"></i>
<i class="rb" style="left:366px;top:421px"></i>
<i class="rb" style="left:374px;top:421px"></i>
<i class="rb" style="left:382px;top:421px"></i>
<i class="rb" style="left:390px;top:421px"></i>
<i class="rb" style="left:398px;top:421px"></i>
<i class="rb" style="left:406px;top:421px"></i>
<i class="rb" style="left:414px;top:421px"></i>
<i class="rb" style="left:422px;top:421px"></i>
<i class="rb" style="left:430px;top:421px"></i>
<i class="rb" style="left:438px;top:421px"></i>
<i class="rd" style="left:446px;top:421px"></i>
<i class="rb" style="left:454px;top:421px"></i>
<i class="rd" style="left:462px;top:421px"></i>
<i class="rb" style="left:470px;top:421px"></i>
<i class="rd" style="left:478px;top:421px"></i>
<i class="rd" style="left:486px;top:421px"></i>
<i class="rd" style="left:494px;top:421px"></i>
<i class="rd" style="left:502px;top:421px"></i>
<i class="rd" style="left:510px;top:421px"></i>
<i class="rd" style="left:518px;top:421px"></i>
<i class="rd" style="left:526px;top:421px"></i>
<i class="rd" style="left:534px;top:421px"></i>
<i class="rd" style="left:542px;top:421px"></i>
<i class="rd" style="left:550px;top:421px"></i>
<i class="rb" style="left:78px;top:438px"></i>
<i class="rb" style="left:86px;top:438px"></i>
<i class="rb" style="left:94px;top:438px"></i>
<i class="rb" style="left:102px;top:438px"></i>
<i class="rc" style="left:110px;top:438px"></i>
<i class="rb" style="left:118px;top:438px"></i>
<i class="rb" style="left:126px;top:438px"></i>
<i class="rb" style="left:134px;top:438px"></i>
<i class="rb" style="left:142px;top:438px"></i>
<i class="rb" style="left:150px;top:438px"></i>
<i class="rb" style="left:158px;top:438px"></i>
<i class="rb" style="left:166px;top:438px"></i>
<i class="rb" style="left:174px;top:438px"></i>
<i class="rb" style="left:182px;top:438px"></i>
<i class="rc" style="left:190px;top:438px"></i>
<i class="rb" style="left:198px;top:438px"></i>
<i class="rb" style="left:206px;top:438px"></i>
<i class="rb" style="left:214px;top:438px"></i>
<i class="rb" style="left:222px;top:438px"></i>
<i class="rb" style="left:230px;top:438px"></i>
<i class="rb" style="left:238px;top:438px"></i>
<i class="rb" style="left:246px;top:438px"></i>
<i class="rb" style="left:254px;top:438px"></i>
<i class="rb" style="left:262px;top:438px"></i>
<i class="rb" style="left:270px;top:438px"></i>
<i class="rb" style="left:278px;top:438px"></i>
<i class="rb" style="left:286px;top:438px"></i>
<i class="rb" style="left:294px;top:438px"></i>
<i class="rb" style="left:302px;top:438px"></i>
<i class="rb" style="left:310px;top:438px"></i>
<i class="rb" style="left:318px;top:438px"></i>
<i class="rb" style="left:326px;top:438px"></i>
<i class="rb" style="left:334px;top:438px"></i>
<i class="rb" style="left:342px;top:438px"></i>
<i class="rb" style="left:350px;top:438px"></i>
<i class="rb" style="left:358px;top:438px"></i>
<i class="rb" style="left:366px;top:438px"></i>
<i class="rb" style="left:374px;top:438px"></i>
<i class="rb" style="left:382px;top:438px"></i>
<i class="rb" style="left:390px;top:438px"></i>
<i class="rb" style="left:398px;top:438px"></i>
<i class="rb" style="left:406px;top:438px"></i>
<i class="rb" style="left:414px;top:438px"></i>
<i class="rb" style="left:422px;top:438px"></i>
<i class="rb" style="left:430px;top:438px"></i>
<i class="rb" style="left:438px;top:438px"></i>
<i class="rb" style="left:446px;top:438px"></i>
<i class="rb" style="left:454px;top:438px"></i>
<i class="rb" style="left:462px;top:438px"></i>
<i class="rb" style="left:470px;top:438px"></i>
<i class="rb" style="left:478px;top:438px"></i>
<i class="rc" style="left:486px;top:438px"></i>
<i class="rc" style="left:494px;top:438px"></i>
<i class="rc" style="left:502px;top:438px"></i>
<i class="rc" style="left:510px;top:438px"></i>
<i class="rd" style="left:518px;top:438px"></i>
<i class="rd" style="left:526px;top:438px"></i>
<i class="rd" style="left:534px;top:438px"></i>
<i class="rc" style="left:542px;top:438px"></i>
<i class="rc" style="left:550px;top:438px"></i>
<span class="t" style="left:43px;top:201px;">MiB</span>
<span class="t" style="left:243px;top:201px;">(RX</span>
<span class="t" style="left:275px;top:201px;">Bytes/second)</span>
<span class="t" style="left:35px;top:218px;">1.25</span>
<span class="t" style="left:35px;top:235px;">1.04</span>
<span class="t" style="left:35px;top:252px;">0.83</span>
<span class="t" style="left:35px;top:269px;">0.62</span>
<span class="t" style="left:35px;top:286px;">0.42</span>
<span class="t" style="left:35px;top:303px;">0.21</span>
<span class="t" style="left:43px;top:337px;">KiB</span>
<span class="t" style="left:243px;top:337px;">(TX</span>
<span class="t" style="left:275px;top:337px;">Bytes/second)</span>
<span class="t" style="left:19px;top:354px;">280.37</span>
<span class="t" style="left:19px;top:371px;">233.64</span>
<span class="t" style="left:19px;top:388px;">186.91</span>
<span class="t" style="left:19px;top:405px;">140.18</span>
<span class="t" style="left:27px;top:422px;">93.46</span>
<span class="t" style="left:27px;top:439px;">46.73</span>
<span class="t" style="left:75px;top:320px;">1</span>
<span class="t" style="left:107px;top:320px;">5</span>
<span class="t" style="left:139px;top:320px;">10</span>
<span class="t" style="left:179px;top:320px;">15</span>
<span class="t" style="left:219px;top:320px;">20</span>
<span class="t" style="left:259px;top:320px;">25</span>
<span class="t" style="left:299px;top:320px;">30</span>
<span class="t" style="left:339px;top:320px;">35</span>
<span class="t" style="left:379px;top:320px;">40</span>
<span class="t" style="left:419px;top:320px;">45</span>
<span class="t" style="left:459px;top:320px;">50</span>
<span class="t" style="left:499px;top:320px;">55</span>
<span class="t" style="left:539px;top:320px;">60</span>
<span class="t" style="left:75px;top:456px;">1</span>
<span class="t" style="left:107px;top:456px;">5</span>
<span class="t" style="left:139px;top:456px;">10</span>
<span class="t" style="left:179px;top:456px;">15</span>
<span class="t" style="left:219px;top:456px;">20</span>
<span class="t" style="left:259px;top:456px;">25</span>
<span class="t" style="left:299px;top:456px;">30</span>
<span class="t" style="left:339px;top:456px;">35</span>
<span class="t" style="left:379px;top:456px;">40</span>
<span class="t" style="left:419px;top:456px;">45</span>
<span class="t" style="left:459px;top:456px;">50</span>
<span class="t" style="left:499px;top:456px;">55</span>
<span class="t" style="left:539px;top:456px;">60</span>
<i style="left:3px;top:565px;width:224px;height:1px;background:#d3d7cf"></i>
<i style="left:539px;top:565px;width:224px;height:1px;background:#d3d7cf"></i>
<span class="t" style="left:235px;top:558px;">Press</span>
<span class="t" style="left:283px;top:558px;">d</span>
<span class="t" style="left:299px;top:558px;">to</span>
<span class="t" style="left:323px;top:558px;">enable</span>
<span class="t" style="left:379px;top:558px;">detailed</span>
<span class="t" style="left:451px;top:558px;">statistics</span>
<i style="left:3px;top:582px;width:208px;height:1px;background:#d3d7cf"></i>
<i style="left:547px;top:582px;width:216px;height:1px;background:#d3d7cf"></i>
<span class="t" style="left:219px;top:575px;">Press</span>
<span class="t" style="left:267px;top:575px;">i</span>
<span class="t" style="left:283px;top:575px;">to</span>
<span class="t" style="left:307px;top:575px;">enable</span>
<span class="t" style="left:363px;top:575px;">additional</span>
<span class="t" style="left:451px;top:575px;">information</span>
<i style="left:3px;top:591px;width:760px;height:17px;background:#3465a4"></i>
<span class="t" style="left:11px;top:592px;">Sat</span>
<span class="t" style="left:43px;top:592px;">May</span>
<span class="t" style="left:83px;top:592px;">2</span>
<span class="t" style="left:99px;top:592px;">22:38:09</span>
<span class="t" style="left:171px;top:592px;">2020</span>
<span class="t" style="left:627px;top:592px;">Press</span>
<span class="t" style="left:675px;top:592px;">?</span>
<span class="t" style="left:691px;top:592px;">for</span>
<span class="t" style="left:723px;top:592px;">help</span>
<svg style="left:636px;top:380px" width="10" height="18" viewBox="0 0 10 18"><path d="M2 2.5 H7 M2 15.5 H7 M4.5 2.5 V15.5" stroke="#f0f0f0" stroke-width="1.2" fill="none"/></svg>
</body></html>
